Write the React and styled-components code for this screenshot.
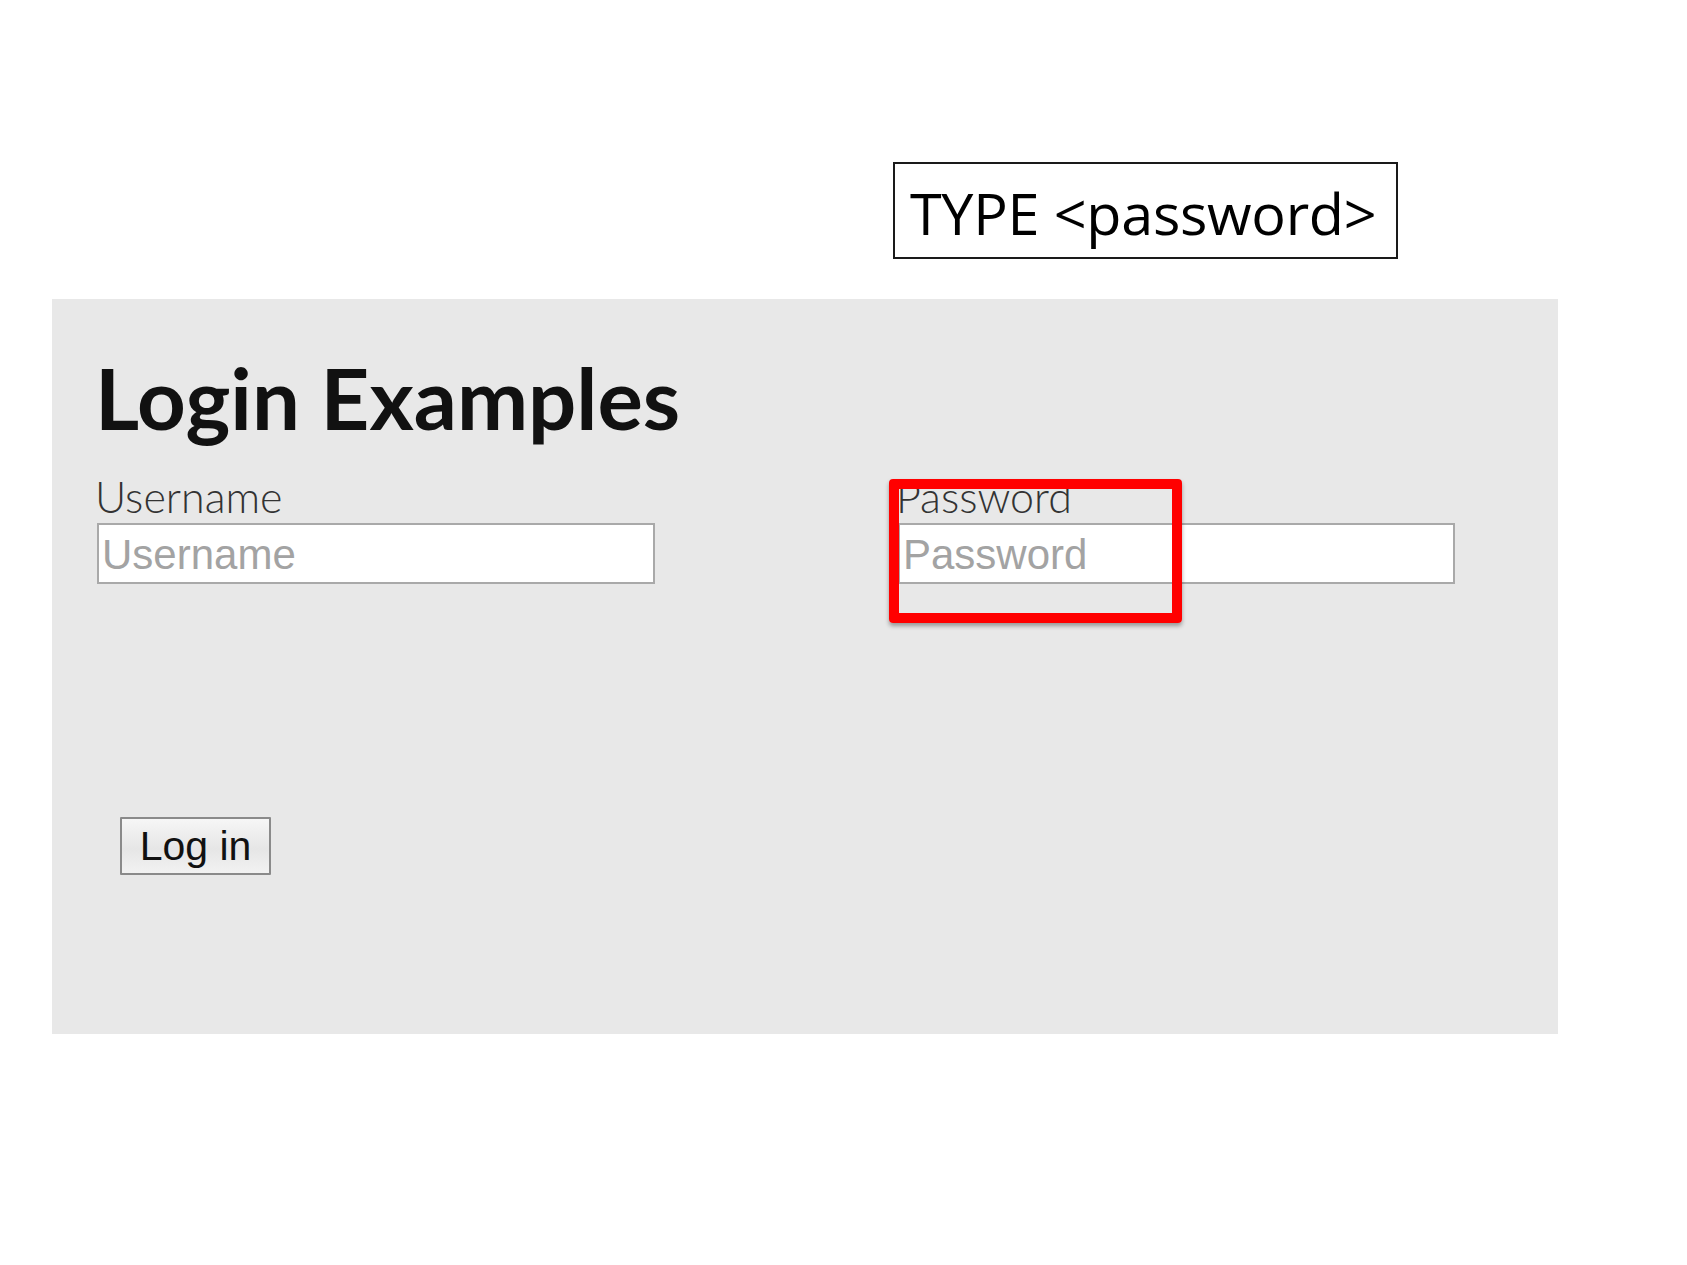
import React from "react";
import styled, { createGlobalStyle } from "styled-components";

const GlobalStyle = createGlobalStyle`
  html, body {
    margin: 0;
    padding: 0;
    background: #ffffff;
  }
  body {
    font-family: "Lato", "Liberation Sans", sans-serif;
  }
`;

const App = () => {
  return (
    <Page>
      <GlobalStyle />
      <CalloutRow>
        <Callout>TYPE &lt;password&gt;</Callout>
      </CalloutRow>
      <Panel>
        <Title>Login Examples</Title>
        <Fields>
          <Field>
            <Label htmlFor="username">Username</Label>
            <Input id="username" type="text" placeholder="Username" />
          </Field>
          <Field>
            <Label htmlFor="password">Password</Label>
            <Input id="password" type="password" placeholder="Password" />
            <Highlight />
          </Field>
        </Fields>
        <LoginButton type="button">Log in</LoginButton>
      </Panel>
    </Page>
  );
};

export default App;

const Page = styled.div`
  width: 1687px;
  min-height: 1265px;
  background: #ffffff;
  overflow: hidden;
`;

const CalloutRow = styled.div`
  display: flex;
  padding-top: 162px;
  padding-left: 893px;
`;

const Callout = styled.div`
  box-sizing: border-box;
  display: flex;
  align-items: center;
  width: 505px;
  height: 97px;
  padding: 4px 0 0 15px;
  border: 2px solid #1a1a1a;
  font-family: "Open Sans", "Noto Sans", sans-serif;
  font-size: 57.5px;
  letter-spacing: -0.3px;
  color: #000;
  white-space: nowrap;
`;

const Panel = styled.div`
  box-sizing: border-box;
  margin-top: 40px;
  margin-left: 52px;
  width: 1506px;
  height: 735px;
  padding: 56px 0 0 45px;
  background: #e8e8e8;
  display: flex;
  flex-direction: column;
  align-items: flex-start;
`;

const Title = styled.h1`
  margin: 0 0 0 -2px;
  font-family: "Lato", sans-serif;
  font-weight: 700;
  font-size: 85px;
  line-height: 84px;
  letter-spacing: 0;
  color: #111;
`;

const Fields = styled.div`
  display: grid;
  grid-template-columns: 558px 557px;
  column-gap: 243px;
  margin-top: 36px;
`;

const Field = styled.div`
  position: relative;
  display: flex;
  flex-direction: column;
`;

const Label = styled.label`
  font-family: "Lato", sans-serif;
  font-weight: 300;
  font-size: 43px;
  line-height: 43px;
  color: #333;
  margin-left: -2px;
  margin-bottom: 5px;
`;

const Input = styled.input`
  box-sizing: border-box;
  width: 100%;
  height: 61px;
  margin: 0;
  padding: 2px 0 0 3px;
  border: 2px solid #a9a9a9;
  background: #ffffff;
  font-family: "Liberation Sans", Arial, sans-serif;
  font-size: 42px;
  color: #333;
  outline: none;
  &::placeholder {
    color: #a3a3a3;
  }
`;

const Highlight = styled.div`
  position: absolute;
  top: 4px;
  left: -9px;
  width: 293px;
  height: 144px;
  box-sizing: border-box;
  border: 10px solid #ff0000;
  border-radius: 4px;
  box-shadow: 0 3px 4px rgba(0, 0, 0, 0.35);
  pointer-events: none;
`;

const LoginButton = styled.button`
  box-sizing: border-box;
  margin-top: 233px;
  margin-left: 23px;
  width: 151px;
  height: 58px;
  padding: 0;
  border: 2px solid #8a8a8a;
  border-radius: 1px;
  background: linear-gradient(#f6f6f6, #e6e6e6 55%, #f2f2f2);
  font-family: "Liberation Sans", Arial, sans-serif;
  font-size: 41px;
  color: #111;
  cursor: pointer;
`;
